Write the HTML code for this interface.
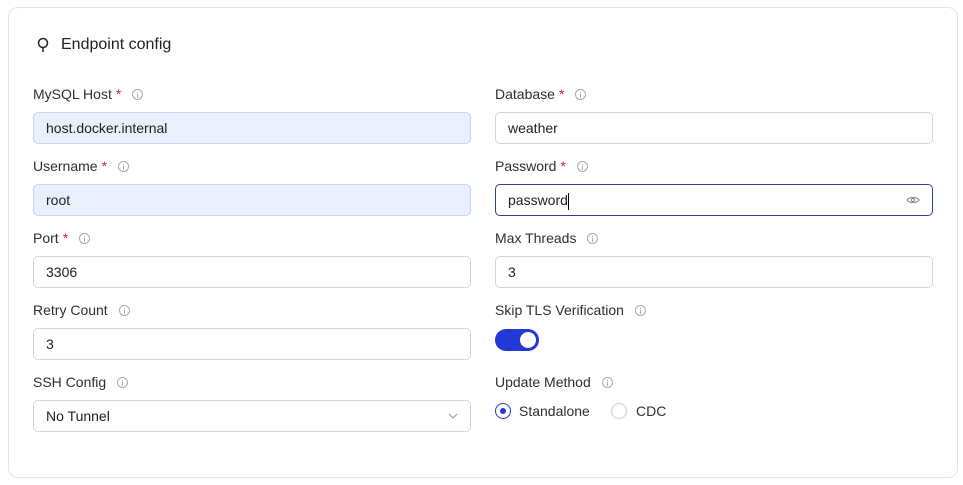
<!DOCTYPE html><html><head><style>
*{box-sizing:border-box;margin:0;padding:0}
body{width:963px;height:485px;background:#fff;font-family:"Liberation Sans",sans-serif;color:#1f2937;position:relative;overflow:hidden}
.card{position:absolute;left:8px;top:7px;width:950px;height:471px;border:1px solid #e3e3e6;border-radius:10px}
.title{position:absolute;left:36px;top:36px;font-size:16px;color:#222;display:flex;align-items:center;gap:11px}
.lab{position:absolute;font-size:14px;color:#2b2f36;display:flex;align-items:center}
.lab .s{color:#e11d2e;margin-left:4px}
.i{display:inline-block;width:11px;height:11px;border:1px solid #aaa;border-radius:50%;margin-left:11px;position:relative}
.i:after{content:"";position:absolute;left:4px;top:4px;width:1px;height:4px;background:#aaa}
.i:before{content:"";position:absolute;left:4px;top:2px;width:1px;height:1px;background:#aaa}
.in{position:absolute;width:438px;height:32px;border:1px solid #d4d4d8;border-radius:5px;font-size:14px;padding-left:12px;line-height:30px;color:#222}
.fill{background:#e8effd;border-color:#c9d3e6}
.L{left:33px}.R{left:495px}
</style></head><body>
<div class="card"></div>
<div class="title"><svg width="14" height="16" viewBox="0 0 14 16"><circle cx="7" cy="6" r="4.5" fill="none" stroke="#222" stroke-width="1.5"/><line x1="7" y1="10.5" x2="7" y2="15" stroke="#222" stroke-width="1.5"/></svg>Endpoint config</div>
<div class="lab L" style="top:86px">MySQL Host<span class="s">*</span><span class="i"></span></div>
<div class="lab R" style="top:86px">Database<span class="s">*</span><span class="i"></span></div>
<div class="in L fill" style="top:112px">host.docker.internal</div>
<div class="in R" style="top:112px">weather</div>
<div class="lab L" style="top:158px">Username<span class="s">*</span><span class="i"></span></div>
<div class="lab R" style="top:158px">Password<span class="s">*</span><span class="i"></span></div>
<div class="in L fill" style="top:184px">root</div>
<div class="in R" style="top:184px;border-color:#2f3fa8;border-width:1.5px">password<span style="display:inline-block;width:1px;height:17px;background:#000;vertical-align:middle"></span><svg style="position:absolute;right:12px;top:10px" width="14" height="10" viewBox="0 0 14 10"><path d="M1 5C3 1.5 11 1.5 13 5C11 8.5 3 8.5 1 5Z" fill="none" stroke="#888" stroke-width="1.1"/><circle cx="7" cy="5" r="1.8" fill="none" stroke="#888" stroke-width="1.1"/></svg></div>
<div class="lab L" style="top:230px">Port<span class="s">*</span><span class="i"></span></div>
<div class="lab R" style="top:230px">Max Threads<span class="i"></span></div>
<div class="in L" style="top:256px">3306</div>
<div class="in R" style="top:256px">3</div>
<div class="lab L" style="top:302px">Retry Count<span class="i"></span></div>
<div class="lab R" style="top:302px">Skip TLS Verification<span class="i"></span></div>
<div class="in L" style="top:328px">3</div>
<div style="position:absolute;left:495px;top:329px;width:44px;height:22px;border-radius:11px;background:#2338d6"><div style="position:absolute;right:3px;top:3px;width:16px;height:16px;border-radius:50%;background:#fff"></div></div>
<div class="lab L" style="top:374px">SSH Config<span class="i"></span></div>
<div class="lab R" style="top:374px">Update Method<span class="i"></span></div>
<div class="in L" style="top:400px">No Tunnel<svg style="position:absolute;right:12px;top:12px" width="10" height="6" viewBox="0 0 10 6"><path d="M1 1L5 5L9 1" fill="none" stroke="#999" stroke-width="1.1"/></svg></div>
<div style="position:absolute;left:495px;top:403px;width:16px;height:16px;border-radius:50%;border:1.5px solid #2338d6"><div style="position:absolute;left:3.5px;top:3.5px;width:6px;height:6px;border-radius:50%;background:#2338d6"></div></div>
<div class="lab" style="left:519px;top:403px">Standalone</div>
<div style="position:absolute;left:611px;top:403px;width:16px;height:16px;border-radius:50%;border:1px solid #ccc"></div>
<div class="lab" style="left:636px;top:403px">CDC</div>
</body></html>
